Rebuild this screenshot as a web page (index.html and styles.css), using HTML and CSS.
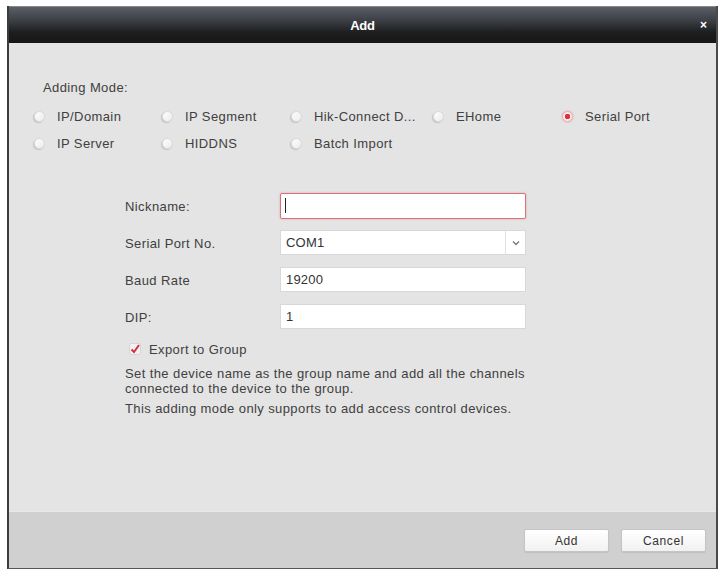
FILE: index.html
```html
<!DOCTYPE html>
<html lang="en">
<head>
  <meta charset="UTF-8" />
  <title>Add</title>
  <link rel="stylesheet" href="styles.css">
</head>
<body>
  <div class="dialog">
    <div class="titlebar">
      <span class="title">Add</span>
      <span class="close">&#215;</span>
    </div>

    <div class="content">
      <div class="mode-label">Adding Mode:</div>
      <div class="modes">
        <label class="radio"><span class="dot"></span>IP/Domain</label>
        <label class="radio"><span class="dot"></span>IP Segment</label>
        <label class="radio"><span class="dot"></span>Hik-Connect D...</label>
        <label class="radio"><span class="dot"></span>EHome</label>
        <label class="radio checked"><span class="dot"></span>Serial Port</label>
        <label class="radio"><span class="dot"></span>IP Server</label>
        <label class="radio"><span class="dot"></span>HIDDNS</label>
        <label class="radio"><span class="dot"></span>Batch Import</label>
      </div>

      <div class="form">
        <div class="row">
          <span class="label">Nickname:</span>
          <div class="field focus"><span class="caret"></span></div>
        </div>
        <div class="row">
          <span class="label">Serial Port No.</span>
          <div class="field select">
            <span class="value">COM1</span>
            <span class="arrow">
              <svg width="8" height="6" viewBox="0 0 8 6"><path d="M1 1.5 L4 4.5 L7 1.5" fill="none" stroke="#777" stroke-width="1.3"/></svg>
            </span>
          </div>
        </div>
        <div class="row">
          <span class="label">Baud Rate</span>
          <div class="field"><span class="value">19200</span></div>
        </div>
        <div class="row">
          <span class="label">DIP:</span>
          <div class="field"><span class="value">1</span></div>
        </div>

        <label class="check">
          <svg width="12" height="12" viewBox="0 0 12 12">
            <rect x="0.5" y="0.5" width="11" height="11" rx="1.5" fill="#f1f1f1" stroke="#d6d6d6"/>
            <path d="M2.5 6.5 L5 9 L10 2" fill="none" stroke="#d23340" stroke-width="2"/>
          </svg>
          Export to Group
        </label>

        <p class="note">Set the device name as the group name and add all the channels connected to the device to the group.</p>
        <p class="note second">This adding mode only supports to add access control devices.</p>
      </div>
    </div>

    <div class="footer">
      <button class="btn">Add</button>
      <button class="btn">Cancel</button>
    </div>
  </div>
</body>
</html>
```

FILE: styles.css
```css
* {
  margin: 0;
  padding: 0;
  box-sizing: border-box;
}

:root {
  --text: #404040;
  --body-bg: #e4e4e4;
  --footer-bg: #d0d0d0;
  --field-border: #d8d8d8;
  --red: #d6343f;
}

body {
  font-family: "Liberation Sans", Arial, sans-serif;
  font-size: 13px;
  color: var(--text);
  background: #fff;
}

.dialog {
  margin: 6px 0 0 7px;
  width: 711px;
  height: 563px;
  display: flex;
  flex-direction: column;
  border-left: 2px solid #3c3c3c;
  border-right: 2px solid #4a4a4a;
  border-bottom: 1px solid #555;
  background: var(--body-bg);
}

.titlebar {
  height: 37px;
  flex: none;
  position: relative;
  display: flex;
  align-items: center;
  justify-content: center;
  background: linear-gradient(#5a5f66 0%, #3a3d42 40%, #1d1e20 70%, #161616 100%);
  border-top: 1px solid #888;
}

.title {
  color: #fff;
  font-weight: bold;
  font-size: 13px;
  letter-spacing: -0.2px;
}

.close {
  position: absolute;
  right: 9px;
  top: 11px;
  color: #fff;
  font-weight: bold;
  font-size: 12px;
}

.content {
  flex: 1;
  padding: 37px 0 0 25px;
  letter-spacing: 0.4px;
}

.mode-label {
  line-height: 16px;
  padding-left: 9px;
}

.modes {
  margin-top: 7px;
  display: grid;
  grid-template-columns: 128px 129px 142px 129px 1fr;
  grid-auto-rows: 27px;
}

.radio {
  display: flex;
  align-items: center;
  gap: 12px;
  white-space: nowrap;
}

.radio .dot {
  width: 11px;
  height: 11px;
  border-radius: 50%;
  background: linear-gradient(135deg, #fdfdfd, #ececec);
  border: 1px solid #d8d8d8;
  box-shadow: -1px 1px 1px rgba(0, 0, 0, 0.15);
  flex: none;
}

.radio.checked .dot {
  background: radial-gradient(circle, var(--red) 0 2.5px, #fbe9ea 3px);
  border: 1px solid #efa7ad;
  box-shadow: 0 0 2px rgba(214, 52, 63, 0.4);
}

.form {
  margin-top: 36px;
  padding-left: 91px;
  width: 620px;
}

.row {
  display: flex;
  align-items: center;
  height: 25px;
  margin-bottom: 12px;
}

.row:last-of-type {
  margin-bottom: 0;
}

.label {
  width: 155px;
  flex: none;
  padding-top: 2px;
}

.field {
  width: 246px;
  height: 25px;
  background: #fff;
  border: 1px solid var(--field-border);
  display: flex;
  align-items: center;
  padding-left: 5px;
  color: #333;
  letter-spacing: 0.2px;
}

.field.focus {
  border: 1px solid #d9707a;
  border-radius: 2px;
  box-shadow: 0 0 2px rgba(217, 112, 122, 0.6);
  height: 26px;
  padding-left: 4px;
}

.caret {
  width: 1px;
  height: 15px;
  background: #222;
}

.field.select {
  padding-right: 0;
}

.field.select .value {
  flex: 1;
}

.arrow {
  width: 20px;
  height: 100%;
  border-left: 1px solid #e2e2e2;
  display: flex;
  align-items: center;
  justify-content: center;
}

.check {
  margin-top: 12px;
  height: 16px;
  display: flex;
  align-items: center;
  gap: 8px;
  padding-left: 4px;
}

.note {
  margin-top: 9px;
  line-height: 15px;
  width: 420px;
}

.note.second {
  margin-top: 5px;
}

.footer {
  height: 57px;
  flex: none;
  background: var(--footer-bg);
  border-top: 1px solid #e9e9e9;
  display: flex;
  justify-content: flex-end;
  align-items: flex-start;
  gap: 12px;
  padding: 17px 10px 0 0;
}

.btn {
  width: 85px;
  height: 23px;
  font-family: inherit;
  font-size: 12px;
  letter-spacing: 0.6px;
  color: #333;
  background: linear-gradient(#ffffff, #f1f1f1);
  border: 1px solid #c4c4c4;
  border-radius: 2px;
  box-shadow: 0 1px 1px rgba(0, 0, 0, 0.08);
}
```
